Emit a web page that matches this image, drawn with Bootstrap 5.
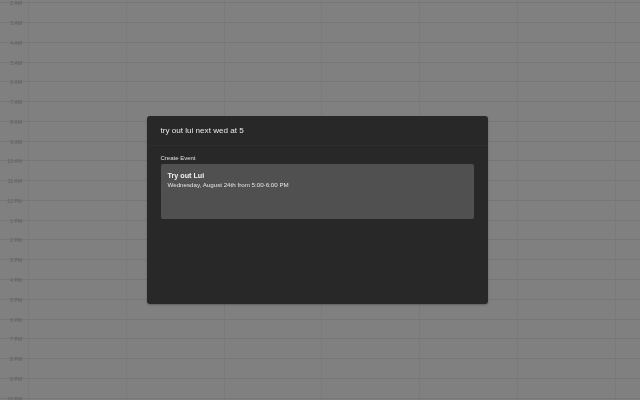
<!DOCTYPE html>
<html lang="en">
<head>
<meta charset="utf-8">
<title>Calendar</title>
<link href="https://cdn.jsdelivr.net/npm/bootstrap@5.3.0/dist/css/bootstrap.min.css" rel="stylesheet">
<style>
html,body{height:400px;overflow:hidden;background:#808080;font-family:"Liberation Sans",Arial,sans-serif}
.cal-sheet{margin-top:-16.5px}
.hour-row{height:19.77px;border-bottom:1px solid #767676}
.hour-label{width:28px;flex:none;font-size:5.2px;line-height:6px;color:#5e5e5e;text-align:right;padding-right:6px;transform:translateY(4px);white-space:nowrap}
.day-cols{position:fixed;inset:0 0 0 28px;display:flex;pointer-events:none}
.day-col{width:97.8px;flex:none;border-left:1px solid #7a7a7a}
.lui-modal{position:fixed;left:146.5px;top:116px;width:341.5px;height:188px;background:#282828;border-radius:3px;box-shadow:0 1px 2px rgba(0,0,0,.25)}
.lui-query{height:30px;padding:2px 14px 0;font-size:8.1px;color:#e8e8e8;border-bottom:1px solid #2e2e2e}
.lui-section{font-size:6px;color:#e0e0e0;padding:7.5px 14px 0;line-height:9px;height:18px}
.lui-card{margin:0 14px;height:55px;background:#505050;border-radius:2px;padding:8px 7px}
.lui-title{font-size:7.2px;font-weight:700;color:#f2f2f2;line-height:8px}
.lui-sub{font-size:6.2px;color:#e4e4e4;line-height:8px;margin-top:.5px}
</style>
</head>
<body>
<div class="cal-sheet">
  <div class="d-flex align-items-end hour-row"><div class="hour-label">2 AM</div></div>
  <div class="d-flex align-items-end hour-row"><div class="hour-label">3 AM</div></div>
  <div class="d-flex align-items-end hour-row"><div class="hour-label">4 AM</div></div>
  <div class="d-flex align-items-end hour-row"><div class="hour-label">5 AM</div></div>
  <div class="d-flex align-items-end hour-row"><div class="hour-label">6 AM</div></div>
  <div class="d-flex align-items-end hour-row"><div class="hour-label">7 AM</div></div>
  <div class="d-flex align-items-end hour-row"><div class="hour-label">8 AM</div></div>
  <div class="d-flex align-items-end hour-row"><div class="hour-label">9 AM</div></div>
  <div class="d-flex align-items-end hour-row"><div class="hour-label">10 AM</div></div>
  <div class="d-flex align-items-end hour-row"><div class="hour-label">11 AM</div></div>
  <div class="d-flex align-items-end hour-row"><div class="hour-label">12 PM</div></div>
  <div class="d-flex align-items-end hour-row"><div class="hour-label">1 PM</div></div>
  <div class="d-flex align-items-end hour-row"><div class="hour-label">2 PM</div></div>
  <div class="d-flex align-items-end hour-row"><div class="hour-label">3 PM</div></div>
  <div class="d-flex align-items-end hour-row"><div class="hour-label">4 PM</div></div>
  <div class="d-flex align-items-end hour-row"><div class="hour-label">5 PM</div></div>
  <div class="d-flex align-items-end hour-row"><div class="hour-label">6 PM</div></div>
  <div class="d-flex align-items-end hour-row"><div class="hour-label">7 PM</div></div>
  <div class="d-flex align-items-end hour-row"><div class="hour-label">8 PM</div></div>
  <div class="d-flex align-items-end hour-row"><div class="hour-label">9 PM</div></div>
  <div class="d-flex align-items-end hour-row"><div class="hour-label">10 PM</div></div>
</div>
<div class="day-cols">
  <div class="day-col"></div><div class="day-col"></div><div class="day-col"></div><div class="day-col"></div><div class="day-col"></div><div class="day-col"></div><div class="day-col"></div>
</div>
<div class="lui-modal">
  <div class="lui-query d-flex align-items-center">try out lui next wed at 5</div>
  <div class="lui-section">Create Event</div>
  <div class="lui-card">
    <div class="lui-title">Try out Lui</div>
    <div class="lui-sub">Wednesday, August 24th from 5:00-6:00 PM</div>
  </div>
</div>
<script src="https://cdn.jsdelivr.net/npm/bootstrap@5.3.0/dist/js/bootstrap.bundle.min.js"></script>
</body>
</html>
